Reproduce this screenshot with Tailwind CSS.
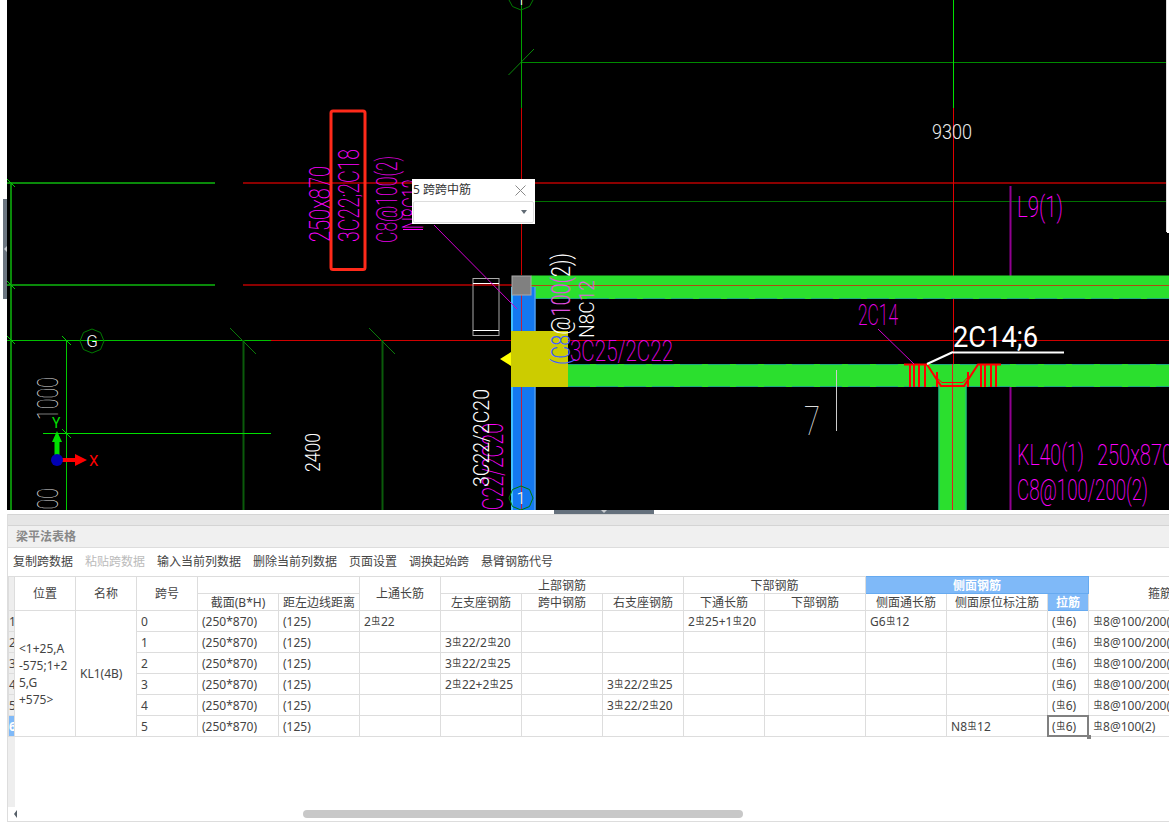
<!doctype html>
<html lang="zh-CN">
  <head>
    <meta charset="UTF-8" />
    <title>梁平法表格</title>
    <script src="https://cdn.jsdelivr.net/npm/@tailwindcss/browser@4"></script>
  </head>

  <body class="bg-white font-['Noto_Sans','Noto_Sans_CJK_SC',sans-serif] text-[12px] text-[#444]">
    <div class="flex h-[824px] w-[1169px] flex-col overflow-hidden">
      <!-- CAD canvas -->
      <div class="flex h-[510px] shrink-0">
        <div class="flex w-[7px] shrink-0 items-start justify-end border-l-2 border-white">
          <div class="ml-px mt-[199px] flex h-[100px] w-[4px] items-center border-l border-[#6b7580] bg-[#6b7580]">
            <div class="h-0 w-0 border-y-[3px] border-r-[3px] border-y-transparent border-r-[#c8ccd0]"></div>
          </div>
        </div>
        <svg class="block h-[510px] w-[1162px] bg-black" viewBox="7 0 1162 510" xmlns="http://www.w3.org/2000/svg" font-family="Roboto, sans-serif" font-weight="100">
          <!-- axis lines -->
          <g fill="none" stroke-width="1">
            <path d="M7 183H215M7 285H215" stroke="#0a8a0a" stroke-width="2" />
            <path d="M243 183H1169M243 285H1169" stroke="#8b0000" stroke-width="2" />
            <path d="M7 340.5H271" stroke="#00c000" />
            <path d="M271 340.5H1169" stroke="#d00000" />
            <path d="M11 183V510" stroke="#0a8a0a" stroke-width="2" />
            <path d="M66.5 340V510" stroke="#00c800" />
            <path d="M243.5 340V510M382.5 340V510" stroke="#0a5a0a" stroke-width="2" />
            <path d="M43 433.5H271" stroke="#00e000" />
            <path d="M521.5 62.5H1169" stroke="#008a00" />
            <path d="M535 201.5H1169" stroke="#007000" />
            <path d="M7 179L15 187M7 281L15 289M7 336L15 344M62 336L71 345M62 429L71 438" stroke="#00d000" />
            <path d="M230 328L256 354M369 328L395 354" stroke="#0a7a0a" />
            <path d="M534 49L508.500 75" stroke="#0a8a0a" />
            <path d="M1010.500 186V285M1010.500 376V510" stroke="#900090" stroke-width="2" />
          </g>
          <rect x="521" y="0" width="1" height="108" fill="#00a000" />
          <rect x="953" y="0" width="1" height="108" fill="#00e000" />
          <rect x="521" y="108" width="1" height="167" fill="#d00000" />
          <rect x="953" y="108" width="1" height="402" fill="#e00000" />

          <!-- beams and columns -->
          <rect x="531" y="275.500" width="638" height="23.500" fill="#2bdf2e" />
          <rect x="568" y="364" width="601" height="23" fill="#2bdf2e" />
          <path d="M531 298.500H1169M568 364.500H1169M568 386.500H1169" stroke="#1fa880" stroke-dasharray="22 6" fill="none" />
          <path d="M531 285.500H1169" stroke="#b04a10" fill="none" />
          <rect x="938.500" y="387" width="28" height="123" fill="#2bdf2e" />
          <path d="M939 387V510M966 387V510" stroke="#1fb0a0" fill="none" />
          <rect x="952" y="364" width="1" height="146" fill="#e02020" />
          <rect x="511.500" y="287" width="24" height="223" fill="#1478f0" />
          <path d="M512 287V510" stroke="#40c0ff" fill="none" stroke-width="2" />
          <path d="M535 287V510" stroke="#6ab0f0" fill="none" />
          <path d="M521.500 295V510" stroke="#c02040" fill="none" />
          <rect x="511" y="331" width="57" height="56" fill="#cccc00" />
          <path d="M500 359L511 352V366Z" fill="#ffff00" />
          <rect x="512" y="276" width="19" height="19" fill="#808080" stroke="#aaaaaa" />

          <!-- stirrup box -->
          <rect x="473" y="278.500" width="26" height="57" fill="none" stroke="#aaaaaa" />
          <path d="M473 283.500H499M473 330.500H499" stroke="#ffffff" fill="none" />

          <!-- bent-up rebar -->
          <g fill="none" stroke="#ff0000">
            <path d="M904 364.500H927L941 386H964L978 364.500H1001" stroke-width="2" />
            <path d="M936 377L942 382.500H963L968 377" />
            <path d="M910 364V387M914 364V387M919 364V387M925 364V387M937 372V387M968 372V387M981 364V387M985 364V387M991 364V387M996 364V387" stroke-width="2" />
          </g>

          <!-- leaders -->
          <path d="M434 225L517 309M878 329L914 364" stroke="#d000d0" fill="none" />
          <path d="M953 352.500H1064M953 352L927 364" stroke="#ffffff" stroke-width="2" fill="none" />
          <path d="M836.500 370V431" stroke="#cccccc" fill="none" />
          <path d="M403 229.500H423" stroke="#ff00ff" fill="none" />

          <!-- red selection mark -->
          <rect x="331" y="111" width="34" height="158.500" rx="2" fill="none" stroke="#ff2a1a" stroke-width="3" />

          <!-- grid bubbles -->
          <g fill="none" stroke="#007a00">
            <path d="M92 329L100.500 332.500L104 341L100.500 349.500L92 353L83.500 349.500L80 341L83.500 332.500Z" />
            <path d="M521 486L529.500 489.500L533 498L529.500 506.500L521 510L512.500 506.500L509 498L512.500 489.500Z" />
            <path d="M509 0L512.500 6.500L521 10L529.500 6.500L533 0" />
          </g>
          <g fill="#ffffff" text-anchor="middle" font-size="17" font-weight="300">
            <text x="92" y="347">G</text>
            <text x="521" y="504" font-size="16">1</text>
            <text x="521" y="5" font-size="16">1</text>
          </g>

          <!-- magenta annotations -->
          <g fill="#ff00ff" font-size="30" font-weight="200">
            <text transform="translate(330 242) rotate(-90)" textLength="76" lengthAdjust="spacingAndGlyphs">250x870</text>
            <text transform="translate(359 242) rotate(-90)" textLength="93" lengthAdjust="spacingAndGlyphs">3C22;2C18</text>
            <text transform="translate(397 243) rotate(-90)" textLength="87" lengthAdjust="spacingAndGlyphs" fill="#e800e8">C8@100(2)</text>
            <text transform="translate(423 229) rotate(-90)" textLength="50" lengthAdjust="spacingAndGlyphs">N8C12</text>
            <text transform="translate(503 521) rotate(-90)" textLength="98" lengthAdjust="spacingAndGlyphs">3C22/2C20</text>
            <text x="570" y="361" textLength="103" lengthAdjust="spacingAndGlyphs" fill="#e800e8">3C25/2C22</text>
            <text x="858" y="325" textLength="40" lengthAdjust="spacingAndGlyphs" fill="#e800e8">2C14</text>
            <text x="1017" y="217" textLength="46" lengthAdjust="spacingAndGlyphs">L9(1)</text>
            <text x="1017" y="465" textLength="67" lengthAdjust="spacingAndGlyphs">KL40(1)</text>
            <text x="1097" y="465" textLength="76" lengthAdjust="spacingAndGlyphs">250x870</text>
            <text x="1017" y="500" textLength="131" lengthAdjust="spacingAndGlyphs">C8@100/200(2)</text>
            <text x="1017" y="531" textLength="160" lengthAdjust="spacingAndGlyphs">3C25;3C25/2C22</text>
          </g>

          <!-- white dimensions -->
          <g fill="#ffffff" font-size="20" font-weight="300">
            <text x="932" y="139" textLength="40" lengthAdjust="spacingAndGlyphs" fill="#eeeeee">9300</text>
            <text transform="translate(320 472) rotate(-90)" textLength="39" lengthAdjust="spacingAndGlyphs">2400</text>
            <text transform="translate(58 420) rotate(-90)" textLength="43" lengthAdjust="spacingAndGlyphs" font-size="30" font-weight="100" fill="#dddddd">1000</text>
            <text transform="translate(58 531) rotate(-90)" textLength="43" lengthAdjust="spacingAndGlyphs" font-size="30" font-weight="100" fill="#dddddd">1000</text>
            <text x="804" y="435" font-size="40" textLength="16" lengthAdjust="spacingAndGlyphs" font-weight="100" fill="#dddddd">7</text>
            <text x="953" y="347" font-size="30" font-weight="400" textLength="85" lengthAdjust="spacingAndGlyphs">2C14;6</text>
            <text transform="translate(489 487) rotate(-90)" textLength="98" lengthAdjust="spacingAndGlyphs" font-size="22">3C22/2C20</text>
            <text transform="translate(594 338) rotate(-90)" font-size="20" textLength="58" lengthAdjust="spacingAndGlyphs">N8C<tspan fill="#e060e0">12</tspan></text>
            <text transform="translate(570 365) rotate(-90)" font-size="26" textLength="112" lengthAdjust="spacingAndGlyphs"><tspan fill="#4060ff">(C8</tspan>@<tspan fill="#e050e0">100(</tspan>2))</text>
          </g>

          <!-- ucs icon -->
          <rect x="54.500" y="442" width="5" height="18" fill="#00e000" />
          <path d="M52 442L57 431L62 442Z" fill="#00e000" />
          <rect x="62" y="458" width="13" height="4" fill="#ff0000" />
          <path d="M75 454L87 460L75 466Z" fill="#ff0000" />
          <circle cx="57" cy="460" r="6" fill="#0000b4" />
          <text x="89" y="466" font-size="15" fill="#ff0000" font-weight="400">X</text>
          <text x="52" y="428" font-size="14" fill="#00e000" font-weight="400">Y</text>

          <!-- window edge showing through on the right -->
          <rect x="1166" y="0" width="1" height="232" fill="#dddddd" />
          <rect x="1167" y="0" width="2" height="233" fill="#ffffff" />
        </svg>
      </div>

      <!-- rebar-name popup -->
      <div class="absolute left-[412px] top-[179px] h-[45px] w-[123px] bg-white">
        <div class="flex h-[22px] items-center justify-between pl-px pr-[9px] leading-none text-[#333]">
          <span>5 跨跨中筋</span>
          <svg class="size-[11px]" viewBox="0 0 11 11" fill="none" stroke="#8a8a8a"><path d="M0.500 0.500L10.500 10.500M10.500 0.500L0.500 10.500" /></svg>
        </div>
        <div class="mx-px flex h-[22px] items-center justify-end rounded-[2px] border border-[#dddddd] pr-[6px]">
          <div class="h-0 w-0 border-x-[3px] border-t-[4px] border-x-transparent border-t-[#606a74]"></div>
        </div>
      </div>

      <!-- splitter -->
      <div class="flex h-[4px] shrink-0 justify-center pl-[39px]">
        <div class="flex h-[4px] w-[100px] justify-center bg-[#64707c]">
          <div class="h-0 w-0 border-x-[3px] border-t-[3px] border-x-transparent border-t-[#c8ccd0]"></div>
        </div>
      </div>

      <!-- bottom panel -->
      <div class="ml-[7px] flex h-[308px] shrink-0 flex-col border-b border-l border-[#dddddd]">
        <div class="h-[12px] shrink-0 border-y border-[#d4d4d4] bg-[#e6e6e6]"></div>
        <div class="flex h-[22px] shrink-0 items-center border-b border-[#dddddd] bg-[#f0f0f0] pl-[8px] font-bold text-[#888888]">梁平法表格</div>
        <div class="flex h-[28px] shrink-0 items-center gap-3 pl-[5px]">
          <span>复制跨数据</span>
          <span class="text-[#bbbbbb]">粘贴跨数据</span>
          <span>输入当前列数据</span>
          <span>删除当前列数据</span>
          <span>页面设置</span>
          <span>调换起始跨</span>
          <span>悬臂钢筋代号</span>
        </div>

        <div class="relative flex min-h-0 flex-1">
          <div class="absolute bottom-[2px] left-0 top-0 w-[7px] bg-[#eeeeee]"></div>
          <table class="relative h-fit w-[1223px] table-fixed border-collapse text-left">
            <colgroup>
              <col class="w-[6px]" />
              <col class="w-[61px]" />
              <col class="w-[61px]" />
              <col class="w-[61px]" />
              <col class="w-[81px]" />
              <col class="w-[81px]" />
              <col class="w-[81px]" />
              <col class="w-[81px]" />
              <col class="w-[81px]" />
              <col class="w-[81px]" />
              <col class="w-[81px]" />
              <col class="w-[101px]" />
              <col class="w-[81px]" />
              <col class="w-[101px]" />
              <col class="w-[41px]" />
              <col class="w-[143px]" />
            </colgroup>
            <thead class="text-center [&_th]:pt-px">
              <tr class="h-[17px] leading-none">
                <th rowspan="2" class="border border-[#dddddd] bg-[#eeeeee] p-0 font-normal"></th>
                <th rowspan="2" class="border border-[#dddddd] p-0 font-normal">位置</th>
                <th rowspan="2" class="border border-[#dddddd] p-0 font-normal">名称</th>
                <th rowspan="2" class="border border-[#dddddd] p-0 font-normal">跨号</th>
                <th colspan="2" class="border border-[#dddddd] p-0 font-normal"></th>
                <th rowspan="2" class="border border-[#dddddd] p-0 font-normal">上通长筋</th>
                <th colspan="3" class="border border-[#dddddd] p-0 font-normal">上部钢筋</th>
                <th colspan="2" class="border border-[#dddddd] p-0 font-normal">下部钢筋</th>
                <th colspan="3" class="border border-[#66aaf0] bg-[#7fb9f8] p-0 font-bold text-white">侧面钢筋</th>
                <th rowspan="2" class="border border-[#dddddd] p-0 font-normal">箍筋</th>
              </tr>
              <tr class="h-[17px] leading-none">
                <th class="border border-[#dddddd] p-0 font-normal">截面(B*H)</th>
                <th class="border border-[#dddddd] p-0 font-normal">距左边线距离</th>
                <th class="border border-[#dddddd] p-0 font-normal">左支座钢筋</th>
                <th class="border border-[#dddddd] p-0 font-normal">跨中钢筋</th>
                <th class="border border-[#dddddd] p-0 font-normal">右支座钢筋</th>
                <th class="border border-[#dddddd] p-0 font-normal">下通长筋</th>
                <th class="border border-[#dddddd] p-0 font-normal">下部钢筋</th>
                <th class="border border-[#dddddd] p-0 font-normal">侧面通长筋</th>
                <th class="border border-[#dddddd] p-0 font-normal">侧面原位标注筋</th>
                <th class="border border-[#66aaf0] bg-[#7fb9f8] p-0 font-bold text-white">拉筋</th>
              </tr>
            </thead>
            <tbody class="[&_td]:border [&_td]:border-[#dddddd] [&_td]:px-[4px] [&_td]:pb-0 [&_td]:pt-px [&_td]:leading-none [&_tr]:h-[21px]">
              <tr>
                <td class="overflow-hidden bg-[#eeeeee] !px-0">1</td>
                <td rowspan="6" class="leading-[17px]! text-[12px]">&lt;1+25,A<br />-575;1+2<br />5,G<br />+575&gt;</td>
                <td rowspan="6">KL1(4B)</td>
                <td>0</td>
                <td>(250*870)</td>
                <td>(125)</td>
                <td>2<span class="inline-block w-[10px] text-center align-[2px] text-[9px]">虫</span>22</td>
                <td></td>
                <td></td>
                <td></td>
                <td class="whitespace-nowrap">2<span class="inline-block w-[10px] text-center align-[2px] text-[9px]">虫</span>25+1<span class="inline-block w-[10px] text-center align-[2px] text-[9px]">虫</span>20</td>
                <td></td>
                <td>G6<span class="inline-block w-[10px] text-center align-[2px] text-[9px]">虫</span>12</td>
                <td></td>
                <td>(<span class="inline-block w-[10px] text-center align-[2px] text-[9px]">虫</span>6)</td>
                <td><span class="inline-block w-[10px] text-center align-[2px] text-[9px]">虫</span>8@100/200(2)</td>
              </tr>
              <tr>
                <td class="overflow-hidden bg-[#eeeeee] !px-0">2</td>
                <td>1</td>
                <td>(250*870)</td>
                <td>(125)</td>
                <td></td>
                <td class="whitespace-nowrap">3<span class="inline-block w-[10px] text-center align-[2px] text-[9px]">虫</span>22/2<span class="inline-block w-[10px] text-center align-[2px] text-[9px]">虫</span>20</td>
                <td></td>
                <td></td>
                <td></td>
                <td></td>
                <td></td>
                <td></td>
                <td>(<span class="inline-block w-[10px] text-center align-[2px] text-[9px]">虫</span>6)</td>
                <td><span class="inline-block w-[10px] text-center align-[2px] text-[9px]">虫</span>8@100/200(2)</td>
              </tr>
              <tr>
                <td class="overflow-hidden bg-[#eeeeee] !px-0">3</td>
                <td>2</td>
                <td>(250*870)</td>
                <td>(125)</td>
                <td></td>
                <td class="whitespace-nowrap">3<span class="inline-block w-[10px] text-center align-[2px] text-[9px]">虫</span>22/2<span class="inline-block w-[10px] text-center align-[2px] text-[9px]">虫</span>25</td>
                <td></td>
                <td></td>
                <td></td>
                <td></td>
                <td></td>
                <td></td>
                <td>(<span class="inline-block w-[10px] text-center align-[2px] text-[9px]">虫</span>6)</td>
                <td><span class="inline-block w-[10px] text-center align-[2px] text-[9px]">虫</span>8@100/200(2)</td>
              </tr>
              <tr>
                <td class="overflow-hidden bg-[#eeeeee] !px-0">4</td>
                <td>3</td>
                <td>(250*870)</td>
                <td>(125)</td>
                <td></td>
                <td class="whitespace-nowrap">2<span class="inline-block w-[10px] text-center align-[2px] text-[9px]">虫</span>22+2<span class="inline-block w-[10px] text-center align-[2px] text-[9px]">虫</span>25</td>
                <td></td>
                <td class="whitespace-nowrap">3<span class="inline-block w-[10px] text-center align-[2px] text-[9px]">虫</span>22/2<span class="inline-block w-[10px] text-center align-[2px] text-[9px]">虫</span>25</td>
                <td></td>
                <td></td>
                <td></td>
                <td></td>
                <td>(<span class="inline-block w-[10px] text-center align-[2px] text-[9px]">虫</span>6)</td>
                <td><span class="inline-block w-[10px] text-center align-[2px] text-[9px]">虫</span>8@100/200(2)</td>
              </tr>
              <tr>
                <td class="overflow-hidden bg-[#eeeeee] !px-0">5</td>
                <td>4</td>
                <td>(250*870)</td>
                <td>(125)</td>
                <td></td>
                <td></td>
                <td></td>
                <td class="whitespace-nowrap">3<span class="inline-block w-[10px] text-center align-[2px] text-[9px]">虫</span>22/2<span class="inline-block w-[10px] text-center align-[2px] text-[9px]">虫</span>20</td>
                <td></td>
                <td></td>
                <td></td>
                <td></td>
                <td>(<span class="inline-block w-[10px] text-center align-[2px] text-[9px]">虫</span>6)</td>
                <td><span class="inline-block w-[10px] text-center align-[2px] text-[9px]">虫</span>8@100/200(2)</td>
              </tr>
              <tr>
                <td class="overflow-hidden bg-[#7fb9f8] !px-0 font-bold text-white">6</td>
                <td>5</td>
                <td>(250*870)</td>
                <td>(125)</td>
                <td></td>
                <td></td>
                <td></td>
                <td></td>
                <td></td>
                <td></td>
                <td></td>
                <td>N8<span class="inline-block w-[10px] text-center align-[2px] text-[9px]">虫</span>12</td>
                <td class="relative">
                  (<span class="inline-block w-[10px] text-center align-[2px] text-[9px]">虫</span>6)
                  <div class="absolute -inset-px border-2 border-[#808080]"></div>
                  <div class="absolute -bottom-[3px] -right-[3px] size-[4px] bg-[#808080]"></div>
                </td>
                <td><span class="inline-block w-[10px] text-center align-[2px] text-[9px]">虫</span>8@100(2)</td>
              </tr>
            </tbody>
          </table>
        </div>

        <!-- horizontal scrollbar -->
        <div class="flex h-[12px] shrink-0 items-center pb-[2px] pl-[6px]">
          <div class="h-0 w-0 border-y-[4px] border-r-[3px] border-y-transparent border-r-[#555f68]"></div>
          <div class="ml-[286px] h-[8px] w-[440px] rounded-full bg-[#c8c8c8]"></div>
        </div>
      </div>
    </div>
  </body>
</html>
